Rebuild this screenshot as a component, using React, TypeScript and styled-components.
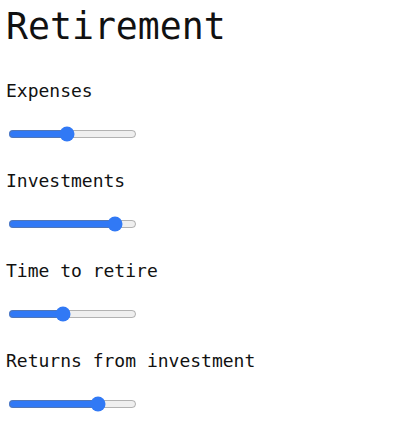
import React, { useState } from 'react'
import styled, { createGlobalStyle } from 'styled-components'

const GlobalStyle = createGlobalStyle`
  body {
    margin: 0;
    background: #fff;
    font-family: "DejaVu Sans Mono", "Liberation Mono", monospace;
    font-size: 18px;
    color: #111;
  }
`

const Page = styled.div`
  padding: 4px 6px;
`

const Title = styled.h1`
  font-size: 36.5px;
  font-weight: 400;
  margin: 0 0 29px 0;
  line-height: 46px;
`

const Field = styled.div`
  display: flex;
  flex-direction: column;
  align-items: flex-start;
  height: 90px;
`

const Label = styled.label`
  line-height: 24px;
`

const Slider = styled.input`
  width: 129px;
  margin: 23px 0 0 2px;
  accent-color: #3179f5;
`

const fields = [
  { name: 'Expenses', value: 45 },
  { name: 'Investments', value: 88 },
  { name: 'Time to retire', value: 42 },
  { name: 'Returns from investment', value: 73 },
]

export default function App() {
  const [values, setValues] = useState(fields.map((f) => f.value))
  return (
    <Page>
      <GlobalStyle />
      <Title>Retirement</Title>
      {fields.map((f, i) => (
        <Field key={f.name}>
          <Label htmlFor={'f' + i}>{f.name}</Label>
          <Slider
            id={'f' + i}
            type='range'
            min={0}
            max={100}
            value={values[i]}
            onChange={(e) => {
              const next = values.slice()
              next[i] = Number(e.target.value)
              setValues(next)
            }}
          />
        </Field>
      ))}
    </Page>
  )
}
